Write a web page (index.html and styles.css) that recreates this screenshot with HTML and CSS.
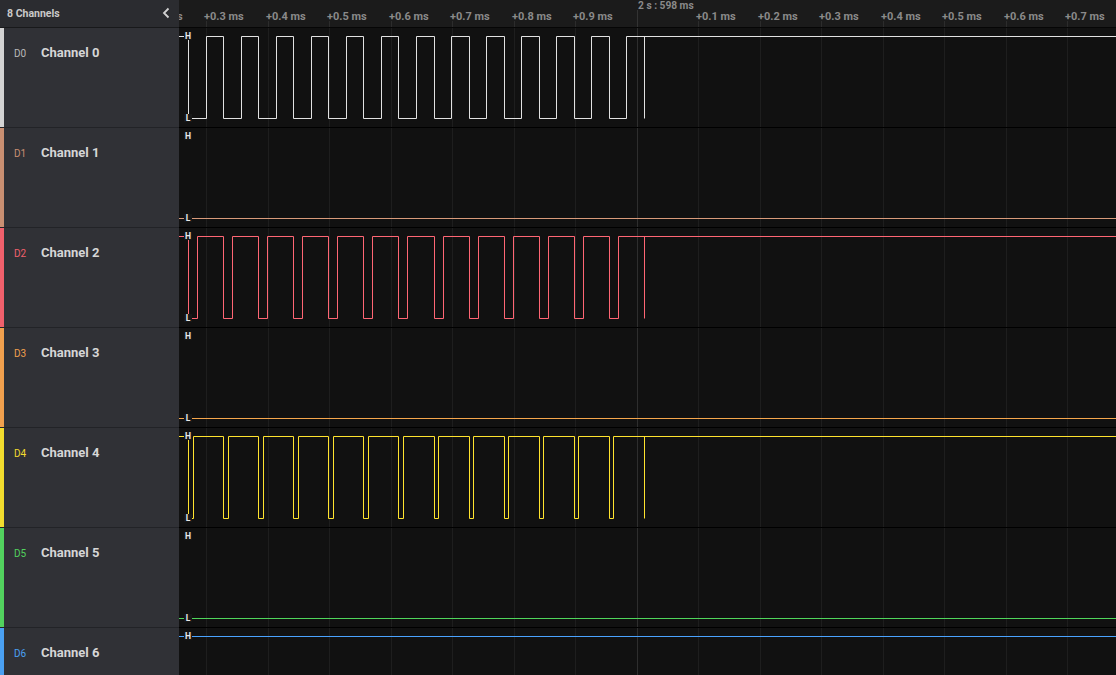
FILE: index.html
```html
<!DOCTYPE html>
<html lang="en">

<head>
    <meta charset="UTF-8" />
    <title>Logic Analyzer</title>
    <meta name="viewport" content="width=device-width, initial-scale=1.0" />
    <link rel="stylesheet" href="styles.css">
</head>

<body>

    <!-- Channel list -->
    <aside class="sidebar">
        <div class="sidebar-head">
            <span>8 Channels</span>
            <svg class="collapse" width="8" height="12" viewBox="0 0 8 12">
                <polyline points="6.5,1.5 2,6 6.5,10.5" fill="none" stroke="#d2d2d2" stroke-width="1.8" />
            </svg>
        </div>
        <div class="channel ch0"><span class="ch-id">D0</span><span class="ch-name">Channel 0</span></div>
        <div class="channel ch1"><span class="ch-id">D1</span><span class="ch-name">Channel 1</span></div>
        <div class="channel ch2"><span class="ch-id">D2</span><span class="ch-name">Channel 2</span></div>
        <div class="channel ch3"><span class="ch-id">D3</span><span class="ch-name">Channel 3</span></div>
        <div class="channel ch4"><span class="ch-id">D4</span><span class="ch-name">Channel 4</span></div>
        <div class="channel ch5"><span class="ch-id">D5</span><span class="ch-name">Channel 5</span></div>
        <div class="channel ch6"><span class="ch-id">D6</span><span class="ch-name">Channel 6</span></div>
    </aside>

    <!-- Timeline -->
    <main class="timeline">
        <div class="ruler">
            <span class="tick" style="left: -36px">+0.2 ms</span>
            <span class="tick" style="left: 25px">+0.3 ms</span>
            <span class="tick" style="left: 87px">+0.4 ms</span>
            <span class="tick" style="left: 148px">+0.5 ms</span>
            <span class="tick" style="left: 210px">+0.6 ms</span>
            <span class="tick" style="left: 271px">+0.7 ms</span>
            <span class="tick" style="left: 333px">+0.8 ms</span>
            <span class="tick" style="left: 394px">+0.9 ms</span>
            <span class="marker" style="left: 459px">2 s : 598 ms</span>
            <span class="tick" style="left: 517px">+0.1 ms</span>
            <span class="tick" style="left: 579px">+0.2 ms</span>
            <span class="tick" style="left: 640px">+0.3 ms</span>
            <span class="tick" style="left: 702px">+0.4 ms</span>
            <span class="tick" style="left: 763px">+0.5 ms</span>
            <span class="tick" style="left: 825px">+0.6 ms</span>
            <span class="tick" style="left: 886px">+0.7 ms</span>
        </div>

        <div class="tracks">
            <svg class="grid" width="937" height="647">
                <path d="M27.5 0V647M89.5 0V647M150.5 0V647M212.5 0V647M273.5 0V647M335.5 0V647M396.5 0V647M519.5 0V647M581.5 0V647M642.5 0V647M704.5 0V647M765.5 0V647M827.5 0V647M888.5 0V647"
                    stroke="#1e1e1e" />
                <path d="M458.5 0V647" stroke="#2e2e2e" />
            </svg>

            <div class="track">
                <svg class="wave" width="937" height="99">
                    <path class="sig0"
                        d="M0 8.5H9.5V90.5H27.5V8.5H44.5V90.5H62.5V8.5H79.5V90.5H97.5V8.5H114.5V90.5H132.5V8.5H149.5V90.5H167.5V8.5H184.5V90.5H202.5V8.5H219.5V90.5H237.5V8.5H255.5V90.5H272.5V8.5H290.5V90.5H307.5V8.5H325.5V90.5H342.5V8.5H360.5V90.5H377.5V8.5H395.5V90.5H412.5V8.5H430.5V90.5H447.5V8.5H937M465.5 8.5V90.5" />
                </svg>
                <span class="lvl hi">H</span><span class="lvl lo">L</span>
            </div>

            <div class="track">
                <svg class="wave" width="937" height="99">
                    <path class="sig1" d="M0 90.5H937" />
                </svg>
                <span class="lvl hi">H</span><span class="lvl lo">L</span>
            </div>

            <div class="track">
                <svg class="wave" width="937" height="99">
                    <path class="sig2"
                        d="M0 8.5H9.5V90.5H18.5V8.5H44.5V90.5H53.5V8.5H79.5V90.5H88.5V8.5H114.5V90.5H123.5V8.5H149.5V90.5H158.5V8.5H184.5V90.5H193.5V8.5H219.5V90.5H228.5V8.5H255.5V90.5H264.5V8.5H290.5V90.5H299.5V8.5H325.5V90.5H334.5V8.5H360.5V90.5H369.5V8.5H395.5V90.5H404.5V8.5H430.5V90.5H439.5V8.5H937M465.5 8.5V90.5" />
                </svg>
                <span class="lvl hi">H</span><span class="lvl lo">L</span>
            </div>

            <div class="track">
                <svg class="wave" width="937" height="99">
                    <path class="sig3" d="M0 90.5H937" />
                </svg>
                <span class="lvl hi">H</span><span class="lvl lo">L</span>
            </div>

            <div class="track">
                <svg class="wave" width="937" height="99">
                    <path class="sig4"
                        d="M0 8.5H9.5V90.5H14.5V8.5H44.5V90.5H49.5V8.5H79.5V90.5H84.5V8.5H114.5V90.5H119.5V8.5H149.5V90.5H154.5V8.5H184.5V90.5H189.5V8.5H219.5V90.5H224.5V8.5H255.5V90.5H259.5V8.5H290.5V90.5H294.5V8.5H325.5V90.5H329.5V8.5H360.5V90.5H364.5V8.5H395.5V90.5H399.5V8.5H430.5V90.5H434.5V8.5H937M465.5 8.5V90.5" />
                </svg>
                <span class="lvl hi">H</span><span class="lvl lo">L</span>
            </div>

            <div class="track">
                <svg class="wave" width="937" height="99">
                    <path class="sig5" d="M0 90.5H937" />
                </svg>
                <span class="lvl hi">H</span><span class="lvl lo">L</span>
            </div>

            <div class="track last">
                <svg class="wave" width="937" height="47">
                    <path class="sig6" d="M0 8.5H937" />
                </svg>
                <span class="lvl hi">H</span>
            </div>
        </div>
    </main>

</body>

</html>
```

FILE: styles.css
```css
body {
    margin: 0;
    height: 100vh;
    display: flex;
    overflow: hidden;
    background: #111;
    font-family: Roboto, "Liberation Sans", sans-serif;
}

/* ---------- channel list ---------- */

.sidebar {
    width: 179px;
    flex: none;
    background: #303136;
    overflow: hidden;
}

.sidebar-head {
    height: 28px;
    box-sizing: border-box;
    padding: 0 9px 1px 7px;
    display: flex;
    align-items: center;
    justify-content: space-between;
    background: #2b2c30;
    border-bottom: 1px solid #18191b;
    color: #c9c9c9;
    font-size: 10.5px;
    font-weight: 700;
}

.collapse {
    display: block;
}

.channel {
    height: 100px;
    box-sizing: border-box;
    padding: 17px 0 0 14px;
    display: flex;
    align-items: baseline;
    border-bottom: 1px solid #222327;
    box-shadow: inset 4px 0 0 var(--c);
}

.channel:last-child {
    height: 47px;
    border-bottom: none;
}

.ch-id {
    width: 27px;
    font-size: 10px;
    color: var(--c);
}

.ch-name {
    font-size: 13px;
    line-height: 16px;
    font-weight: 700;
    color: #d6d6d6;
}

.ch0 { --c: #d3d3d3; }
.ch1 { --c: #c98f72; }
.ch2 { --c: #f0606c; }
.ch3 { --c: #f0a04e; }
.ch4 { --c: #f2dc2e; }
.ch5 { --c: #52d15e; }
.ch6 { --c: #4aa0f2; }

.ch0 .ch-id { color: #b9b9b9; }

/* ---------- timeline ---------- */

.timeline {
    flex: 1;
    min-width: 0;
    display: flex;
    flex-direction: column;
    overflow: hidden;
}

.ruler {
    position: relative;
    height: 28px;
    flex: none;
    box-sizing: border-box;
    background: #1b1b1b;
    border-bottom: 1px solid #060606;
    overflow: hidden;
}

.tick,
.marker {
    position: absolute;
    white-space: nowrap;
    font-weight: 700;
    color: #8a8a8a;
}

.tick {
    top: 11px;
    font-size: 11px;
    line-height: 11px;
}

.tick::before {
    content: "";
    position: absolute;
    left: 2px;
    top: 10px;
    width: 1px;
    height: 7px;
    background: #2c2c2c;
}

.marker {
    top: 1px;
    font-size: 10.2px;
    line-height: 10px;
}

.marker::before {
    content: "";
    position: absolute;
    left: -1px;
    top: 9px;
    width: 1px;
    height: 20px;
    background: #333;
}

.tracks {
    position: relative;
    flex: 1;
    overflow: hidden;
}

.grid {
    position: absolute;
    top: 0;
    left: 0;
}

.track {
    position: relative;
    height: 100px;
    box-sizing: border-box;
    border-bottom: 1px solid #000;
}

.track.last {
    height: 47px;
    border-bottom: none;
}

.wave {
    display: block;
}

.wave path {
    fill: none;
    stroke-width: 1;
}

.sig0 { stroke: #e2e2e2; }
.sig1 { stroke: #d89a7a; }
.sig2 { stroke: #ff6674; }
.sig3 { stroke: #f5a64c; }
.sig4 { stroke: #ffe32e; }
.sig5 { stroke: #4fd65b; }
.sig6 { stroke: #4aa3ff; }

.lvl {
    position: absolute;
    left: 5px;
    width: 8px;
    height: 8px;
    background: #181818;
    color: #e8e8e8;
    font-size: 8.5px;
    line-height: 8px;
    font-weight: 700;
    text-align: center;
}

.lvl.hi {
    top: 4px;
}

.lvl.lo {
    top: 86px;
}
```
